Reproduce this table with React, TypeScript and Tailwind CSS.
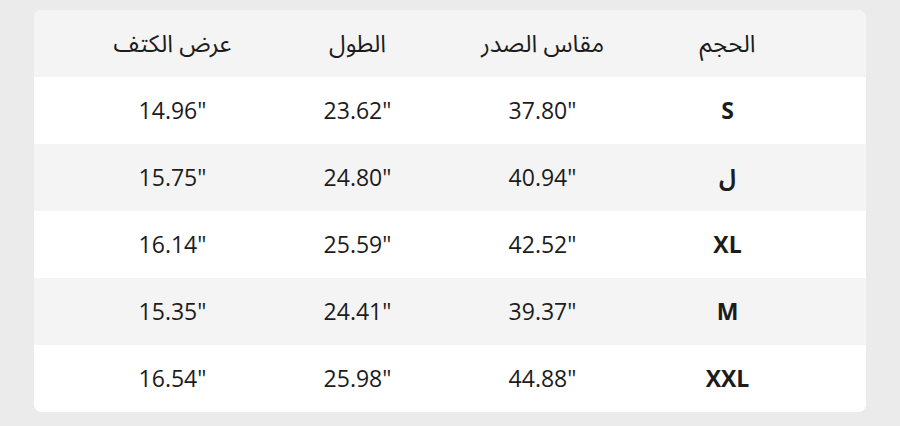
const headers = ["عرض الكتف", "الطول", "مقاس الصدر", "الحجم"];

const rows: [string, string, string, string][] = [
  ['14.96"', '23.62"', '37.80"', "S"],
  ['15.75"', '24.80"', '40.94"', "ل"],
  ['16.14"', '25.59"', '42.52"', "XL"],
  ['15.35"', '24.41"', '39.37"', "M"],
  ['16.54"', '25.98"', '44.88"', "XXL"],
];

const font = {
  fontFamily: '"Open Sans", "Noto Sans Arabic", "Noto Sans", "DejaVu Sans", sans-serif',
};

export default function App() {
  return (
    <div className="w-[900px] h-[426px] bg-[#ebebeb] pt-[10px] px-[34px]" style={font}>
      <div className="bg-white rounded-lg overflow-hidden text-[#1c1c1c]">
        <div className="grid grid-cols-4 h-[67px] items-center px-[46px] bg-[#f4f4f4]">
          {headers.map((h) => (
            <div key={h} dir="rtl" className="text-center text-[24px] leading-none pb-[2px]">
              {h}
            </div>
          ))}
        </div>
        {rows.map((r, i) => (
          <div
            key={i}
            className={
              "grid grid-cols-4 h-[67px] items-center px-[46px] " +
              (i % 2 === 1 ? "bg-[#f4f4f4]" : "bg-white")
            }
          >
            <div className="text-center text-[23px]">{r[0]}</div>
            <div className="text-center text-[23px]">{r[1]}</div>
            <div className="text-center text-[23px]">{r[2]}</div>
            <div className="text-center text-[23px] font-bold">{r[3]}</div>
          </div>
        ))}
      </div>
    </div>
  );
}
